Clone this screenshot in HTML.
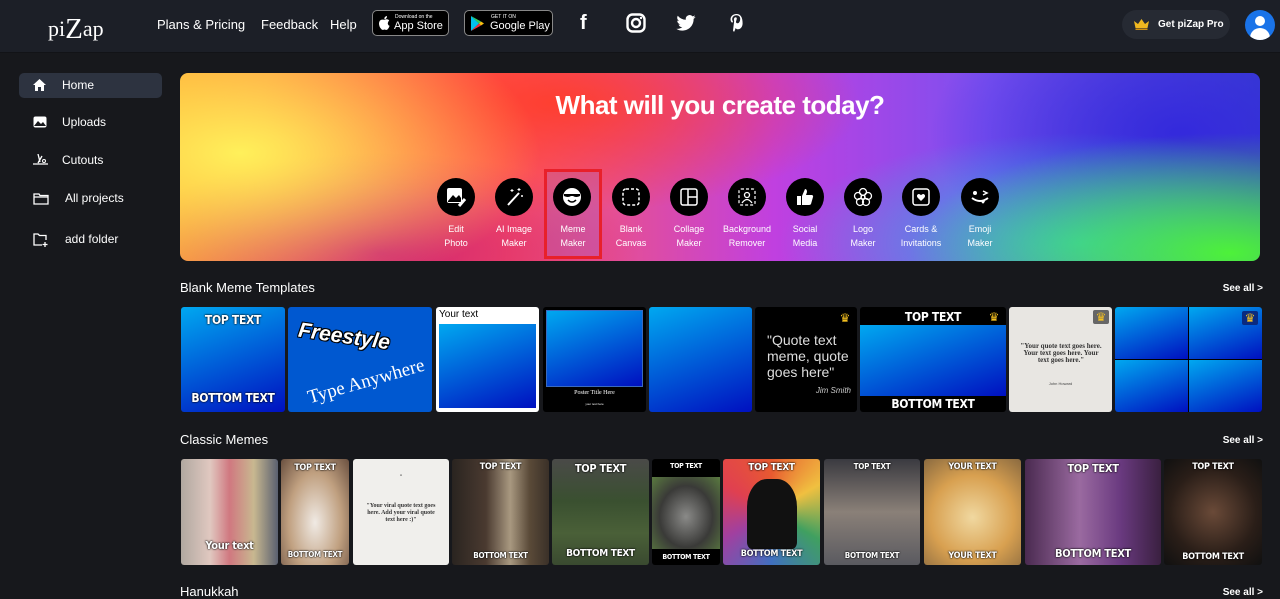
<!DOCTYPE html>
<html><head><meta charset="utf-8">
<style>
*{box-sizing:border-box;margin:0;padding:0}
body{width:1280px;height:596px;overflow:hidden;background:#17181c;font-family:"Liberation Sans",sans-serif;color:#fff;position:relative}
.hdr{position:absolute;left:0;top:0;width:1280px;height:53px;background:#1c1f27;border-bottom:1px solid #121317}
.abs{position:absolute}
.nav{font-size:13px;top:17px}
.badge{position:absolute;top:10px;height:26px;border:1px solid #888;border-radius:5px;background:#000}
.side{position:absolute;left:19px;width:143px;height:25px;font-size:12px;line-height:25px}
.side span{position:absolute;left:43px}
.side svg{position:absolute;left:14px;top:6px}
.banner{position:absolute;left:180px;top:73px;width:1080px;height:188px;border-radius:8px;overflow:hidden;
background:
radial-gradient(ellipse 300px 150px at 60px 80px,rgba(255,240,90,1),rgba(255,200,60,0) 100%),
radial-gradient(ellipse 320px 120px at 1050px 180px,rgba(80,255,40,.9),rgba(80,255,40,0) 100%),
radial-gradient(ellipse 300px 110px at 900px 170px,rgba(40,200,220,.8),rgba(40,200,220,0) 100%),
radial-gradient(ellipse 250px 140px at 1000px 60px,rgba(50,40,220,.95),rgba(50,40,220,0) 100%),
radial-gradient(ellipse 300px 110px at 380px 30px,rgba(255,60,40,.9),rgba(255,60,40,0) 100%),
radial-gradient(ellipse 260px 100px at 200px 180px,rgba(200,20,120,.9),rgba(200,20,120,0) 100%),
linear-gradient(90deg,#ff9a30 0%,#ff5a60 30%,#c040e0 55%,#7a50f0 75%,#3a40d0 100%)}
.ic{position:absolute;top:178px;width:38px;height:38px;border-radius:50%;background:#000}
.ic svg{position:absolute;left:9px;top:9px}
.lb{position:absolute;top:222px;width:70px;text-align:center;font-size:9px;line-height:14px}
.sec{position:absolute;left:180px;font-size:13px}
.see{position:absolute;right:17px;font-size:10px;font-weight:bold}
.t{position:absolute;overflow:hidden;border-radius:3px}
.bl{background:linear-gradient(160deg,#00a8f0,#0010c0)}
.imp{font-family:"Liberation Sans Narrow","DejaVu Sans Condensed","Liberation Sans",sans-serif;font-weight:bold;color:#fff;text-align:center;font-size:12px;text-shadow:0 0 2px #000,0 0 1px #000;position:absolute;width:100%;letter-spacing:-.3px;white-space:nowrap}
.crown{position:absolute;width:16px;height:14px;color:#f4c020;font-size:12px;text-align:center;line-height:14px}
</style></head><body>
<div class="hdr">
 <div class="abs" style="left:48px;top:11px;font-family:'Liberation Serif',serif;font-size:22px">pi<span style="font-size:29px;position:relative;top:2px">Z</span>ap</div>
 <div class="abs nav" style="left:157px">Plans &amp; Pricing</div>
 <div class="abs nav" style="left:261px">Feedback</div>
 <div class="abs nav" style="left:330px">Help</div>
 <div class="badge" style="left:372px;width:77px"><svg style="position:absolute;left:6px;top:5px" width="11" height="14" viewBox="0 0 11 14"><path d="M8 0Q8.2 1.8 6.5 3Q5.5 3.4 5.3 2.5Q5.5 0.6 8 0Z M5.5 3.8Q7 3.1 8 3.3Q9.5 3.5 10.2 4.6Q8.6 5.7 8.8 7.5Q9 9.2 10.6 9.9Q9.8 12.5 8.3 13.6Q7.5 14.2 6.4 13.7Q5.5 13.3 4.6 13.7Q3.5 14.2 2.7 13.5Q0 11 0 7.5Q0.2 4 3 3.6Q4.2 3.5 5.5 3.8Z" fill="#fff"/></svg><span style="position:absolute;left:22px;top:3px;font-size:5px">Download on the</span><span style="position:absolute;left:21px;top:9px;font-size:11px">App Store</span></div>
 <div class="badge" style="left:464px;width:89px"><svg style="position:absolute;left:6px;top:5px" width="13" height="15" viewBox="0 0 13 15"><path d="M0 0L8 7.5L0 15Z" fill="#00c0f0"/><path d="M0 0L10 5.5L8 7.5Z" fill="#30d060"/><path d="M0 15L10 9.5L8 7.5Z" fill="#f03040"/><path d="M10 5.5L13 7.5L10 9.5L8 7.5Z" fill="#f8c010"/></svg><span style="position:absolute;left:26px;top:3px;font-size:5px">GET IT ON</span><span style="position:absolute;left:25px;top:9px;font-size:11px">Google Play</span></div>
 <div class="abs" style="left:580px;top:12px;font-size:20px;font-weight:bold">f</div>
 <svg class="abs" style="left:626px;top:13px" width="20" height="20" viewBox="0 0 20 20"><rect x="1.5" y="1.5" width="17" height="17" rx="5" fill="none" stroke="#fff" stroke-width="2.4"/><circle cx="10" cy="10" r="4" fill="none" stroke="#fff" stroke-width="2.4"/><circle cx="15" cy="5" r="1.2" fill="#fff"/></svg>
 <svg class="abs" style="left:676px;top:15px" width="20" height="16" viewBox="0 0 24 20"><path d="M24 2.4a10 10 0 0 1-2.8.8A5 5 0 0 0 23.3.5a10 10 0 0 1-3.1 1.2A4.9 4.9 0 0 0 11.8 6 14 14 0 0 1 1.7.9a4.9 4.9 0 0 0 1.5 6.6A4.9 4.9 0 0 1 1 6.9a4.9 4.9 0 0 0 3.9 4.8 5 5 0 0 1-2.2.1 4.9 4.9 0 0 0 4.6 3.4A9.9 9.9 0 0 1 0 17.3 14 14 0 0 0 7.5 19.5c9.1 0 14-7.5 14-14v-.6A10 10 0 0 0 24 2.4z" fill="#fff"/></svg>
 <svg class="abs" style="left:729px;top:13px" width="15" height="20" viewBox="0 0 15 20"><path d="M7.5 1C3.5 1 1.5 3.8 1.5 6.3c0 1.6.6 3 1.9 3.5l.6-1.5c-.5-.6-.8-1.2-.8-2.1 0-2.5 1.9-4 4.3-4 2.3 0 3.7 1.5 3.7 3.5 0 2.6-1.2 4.6-2.8 4.6-.9 0-1.6-.8-1.4-1.7.3-1.1.8-2.3.8-3.1 0-.7-.4-1.3-1.2-1.3-.9 0-1.7 1-1.7 2.3 0 .8.3 1.4.3 1.4L4 17.5 5 19c.6-1 1.3-2.8 1.6-4 .5.8 1.3 1.3 2.4 1.3 3 0 4.6-3 4.6-6C13.6 3.9 11.3 1 7.5 1z" fill="#fff"/></svg>
 <div class="abs" style="left:1122px;top:10px;width:108px;height:29px;border-radius:15px;background:#262a33"><svg style="position:absolute;left:12px;top:9px" width="15" height="11" viewBox="0 0 15 11"><path d="M0 2L4 5L7.5 0L11 5L15 2L13.5 9H1.5Z" fill="#f0b820"/><rect x="1.5" y="9.5" width="12" height="1.5" fill="#d09010"/></svg><span style="position:absolute;left:36px;top:9px;font-size:10px;font-weight:bold">Get piZap Pro</span></div>
 <div class="abs" style="left:1245px;top:10px;width:30px;height:30px;border-radius:50%;background:#1a73e8;overflow:hidden"><div style="position:absolute;left:10px;top:6px;width:10px;height:10px;border-radius:50%;background:#fff"></div><div style="position:absolute;left:5px;top:18px;width:20px;height:14px;border-radius:10px 10px 0 0;background:#fff"></div></div>
</div>

<div class="side" style="top:73px;background:#2d3340;border-radius:5px"><svg width="13" height="12" viewBox="0 0 13 12"><path d="M6.5 0L13 6H11V12H8V8H5V12H2V6H0Z" fill="#fff"/></svg><span>Home</span></div>
<div class="side" style="top:110px"><svg width="14" height="12" viewBox="0 0 14 12"><rect x="0.5" y="0.5" width="13" height="11" rx="2" fill="#fff"/><path d="M1 10L5 5L8 8L10 6L13 10Z" fill="#17181c"/></svg><span>Uploads</span></div>
<div class="side" style="top:148px"><svg width="15" height="13" viewBox="0 0 15 13"><path d="M5 0L7 8M9 2L5 9M0 10H15" stroke="#fff" stroke-width="1.3" fill="none"/><circle cx="11" cy="7" r="1.5" stroke="#fff" fill="none"/></svg><span>Cutouts</span></div>
<div class="side" style="top:186px"><svg width="16" height="13" viewBox="0 0 16 13"><path d="M1 2H6L7 3.5H15V12H1Z M1 5H15" stroke="#fff" stroke-width="1.3" fill="none"/></svg><span style="left:46px">All projects</span></div>
<div class="side" style="top:227px"><svg width="16" height="14" viewBox="0 0 16 14"><path d="M9 12H1V1H5L6.5 2.5H13V7 M12 9V14 M9.5 11.5H14.5" stroke="#fff" stroke-width="1.3" fill="none"/></svg><span style="left:46px">add folder</span></div>

<div class="banner">
 <div style="position:absolute;width:100%;top:17px;text-align:center;font-size:26px;font-weight:bold;letter-spacing:-.5px">What will you create today?</div>
</div>
<div class="abs" style="left:544px;top:169px;width:58px;height:90px;border:3px solid #e8202a;background:rgba(130,120,240,.2)"></div>

<div class="ic" style="left:437px"><svg width="20" height="20" viewBox="0 0 20 20"><rect x="1" y="1" width="15" height="15" rx="2" fill="#fff"/><path d="M2 14L7 8L10 11L13 8L15 11V15H2Z" fill="#000"/><path d="M13 19L19 12" stroke="#fff" stroke-width="3"/></svg></div>
<div class="ic" style="left:495px"><svg width="20" height="20" viewBox="0 0 20 20"><path d="M4 18L15 6" stroke="#fff" stroke-width="2"/><path d="M8 2V5M6.5 3.5H9.5M15 1V4M13.5 2.5H16.5M18 8V10M17 9H19" stroke="#fff" stroke-width="1"/></svg></div>
<div class="ic" style="left:553px"><svg width="20" height="20" viewBox="0 0 20 20"><circle cx="10" cy="10" r="9" fill="#fff"/><path d="M2 7H18V9Q14 11 11 9H9Q6 11 2 9Z" fill="#000"/><path d="M6 13Q10 17 14 13" stroke="#000" stroke-width="1.5" fill="none"/></svg></div>
<div class="ic" style="left:612px"><svg width="20" height="20" viewBox="0 0 20 20"><rect x="2" y="2" width="16" height="16" rx="3" fill="none" stroke="#fff" stroke-width="1.5" stroke-dasharray="3 2"/></svg></div>
<div class="ic" style="left:670px"><svg width="20" height="20" viewBox="0 0 20 20"><rect x="2" y="2" width="16" height="16" rx="2" fill="none" stroke="#fff" stroke-width="1.5"/><path d="M9 2V18M9 10H18" stroke="#fff" stroke-width="1.5"/></svg></div>
<div class="ic" style="left:728px"><svg width="20" height="20" viewBox="0 0 20 20"><rect x="2" y="2" width="16" height="16" rx="2" fill="none" stroke="#fff" stroke-width="1.2" stroke-dasharray="3 2"/><circle cx="10" cy="8" r="2.5" fill="none" stroke="#fff" stroke-width="1.3"/><path d="M5 16Q10 9 15 16" fill="none" stroke="#fff" stroke-width="1.3"/></svg></div>
<div class="ic" style="left:786px"><svg width="20" height="20" viewBox="0 0 20 20"><path d="M2 9H6V18H2Z M7 9L10 2Q12 2 12 5L11 8H17Q18.5 8.5 18 10L16 17Q15.5 18 14 18H7Z" fill="#fff"/></svg></div>
<div class="ic" style="left:844px"><svg width="20" height="20" viewBox="0 0 20 20"><g fill="none" stroke="#fff" stroke-width="1.3"><circle cx="10" cy="5" r="3.5"/><circle cx="15" cy="9" r="3.5"/><circle cx="13" cy="15" r="3.5"/><circle cx="7" cy="15" r="3.5"/><circle cx="5" cy="9" r="3.5"/><circle cx="10" cy="10" r="2"/></g></svg></div>
<div class="ic" style="left:902px"><svg width="20" height="20" viewBox="0 0 20 20"><rect x="2" y="2" width="16" height="16" rx="2.5" fill="none" stroke="#fff" stroke-width="1.5"/><path d="M10 14L6.5 10.5Q5 8 7.5 7Q9 6.8 10 8.3Q11 6.8 12.5 7Q15 8 13.5 10.5Z" fill="#fff"/></svg></div>
<div class="ic" style="left:961px"><svg width="20" height="20" viewBox="0 0 20 20"><circle cx="5" cy="6" r="2" fill="#fff"/><path d="M13 4L17 6L13 8" stroke="#fff" stroke-width="1.5" fill="none"/><path d="M2 11Q10 17 18 11" stroke="#fff" stroke-width="2" fill="none"/><path d="M11 14Q13 19 15 14" fill="#fff"/></svg></div>

<div class="lb" style="left:421px">Edit<br>Photo</div>
<div class="lb" style="left:479px">AI Image<br>Maker</div>
<div class="lb" style="left:538px">Meme<br>Maker</div>
<div class="lb" style="left:596px">Blank<br>Canvas</div>
<div class="lb" style="left:654px">Collage<br>Maker</div>
<div class="lb" style="left:712px">Background<br>Remover</div>
<div class="lb" style="left:770px">Social<br>Media</div>
<div class="lb" style="left:828px">Logo<br>Maker</div>
<div class="lb" style="left:886px">Cards &amp;<br>Invitations</div>
<div class="lb" style="left:945px">Emoji<br>Maker</div>

<div class="sec" style="top:280px">Blank Meme Templates</div>
<div class="see" style="top:283px">See all &gt;</div>

<div class="t bl" style="left:181px;top:307px;width:104px;height:105px"><div class="imp" style="top:6px">TOP TEXT</div><div class="imp" style="top:84px">BOTTOM TEXT</div></div>
<div class="t" style="left:288px;top:307px;width:144px;height:105px;background:#0058d0"><div style="position:absolute;left:10px;top:18px;font-size:21px;font-weight:bold;font-style:italic;transform:rotate(8deg);text-shadow:1px 1px 0 #000,-1px -1px 0 #000,1px -1px 0 #000,-1px 1px 0 #000">Freestyle</div><div style="position:absolute;left:18px;top:64px;font-family:'Liberation Serif',serif;font-size:19px;transform:rotate(-16deg)">Type Anywhere</div></div>
<div class="t" style="left:436px;top:307px;width:103px;height:105px;background:#fff"><div style="position:absolute;left:3px;top:2px;font-size:10px;color:#000">Your text</div><div class="bl" style="position:absolute;left:3px;top:17px;width:97px;height:84px"></div></div>
<div class="t" style="left:543px;top:307px;width:103px;height:105px;background:#000"><div class="bl" style="position:absolute;left:3px;top:3px;width:97px;height:77px;border:1px solid #3a6ac0"></div><div style="position:absolute;top:83px;width:100%;text-align:center;font-family:'Liberation Serif',serif;font-size:6px">Poster Title Here</div><div style="position:absolute;top:95px;width:100%;text-align:center;font-size:3px">your text here</div></div>
<div class="t bl" style="left:649px;top:307px;width:103px;height:105px"></div>
<div class="t" style="left:755px;top:307px;width:102px;height:105px;background:#000"><div style="position:absolute;left:12px;top:25px;font-size:14px;line-height:16px;color:#ddd">"Quote text meme, quote goes here"</div><div style="position:absolute;right:6px;top:79px;font-size:8px;font-style:italic;color:#ccc">Jim Smith</div><div class="crown" style="right:4px;top:4px">&#9819;</div></div>
<div class="t" style="left:860px;top:307px;width:146px;height:105px;background:#000"><div class="imp" style="top:3px">TOP TEXT</div><div class="bl" style="position:absolute;left:0;top:18px;width:100%;height:71px"></div><div class="imp" style="top:90px">BOTTOM TEXT</div><div class="crown" style="right:4px;top:3px">&#9819;</div></div>
<div class="t" style="left:1009px;top:307px;width:103px;height:105px;background:#e8e6e2"><div style="position:absolute;left:10px;top:36px;width:84px;text-align:center;font-family:'Liberation Serif',serif;font-weight:bold;font-size:7px;line-height:7px;color:#333">"Your quote text goes here. Your text goes here. Your text goes here."</div><div style="position:absolute;top:74px;width:100%;text-align:center;font-size:4px;color:#444">John Howard</div><div class="crown" style="right:3px;top:3px;background:#666;border-radius:2px">&#9819;</div></div>
<div class="t" style="left:1115px;top:307px;width:147px;height:105px;background:#000"><div class="bl" style="position:absolute;left:0;top:0;width:73px;height:52px"></div><div class="bl" style="position:absolute;left:74px;top:0;width:73px;height:52px"></div><div class="bl" style="position:absolute;left:0;top:53px;width:73px;height:52px"></div><div class="bl" style="position:absolute;left:74px;top:53px;width:73px;height:52px"></div><div class="crown" style="right:4px;top:4px;background:#0a2a80;border-radius:2px">&#9819;</div></div>

<div class="sec" style="top:432px">Classic Memes</div>
<div class="see" style="top:435px">See all &gt;</div>

<div class="t" style="left:181px;top:459px;width:97px;height:106px;background:linear-gradient(90deg,#b0a8a0,#e0c8c0 30%,#d07880 50%,#c8b890 75%,#5a6070)"><div class="imp" style="top:80px;font-size:11px">Your text</div></div>
<div class="t" style="left:281px;top:459px;width:68px;height:106px;background:radial-gradient(ellipse at 50% 60%,#f0eae4,#c0a080 55%,#6a5040)"><div class="imp" style="top:4px;font-size:9px">TOP TEXT</div><div class="imp" style="top:91px;font-size:8px">BOTTOM TEXT</div></div>
<div class="t" style="left:353px;top:459px;width:96px;height:106px;background:#f0efec"><div style="position:absolute;top:16px;width:100%;text-align:center;font-size:6px;color:#333">"</div><div style="position:absolute;left:10px;top:44px;width:76px;text-align:center;font-family:'Liberation Serif',serif;font-weight:bold;font-size:6px;line-height:7px;color:#333">"Your viral quote text goes here. Add your viral quote text here :)"</div></div>
<div class="t" style="left:452px;top:459px;width:97px;height:106px;background:linear-gradient(90deg,#2a2420,#4a3a30 35%,#a89880 60%,#5a4a38 80%,#3a3028)"><div class="imp" style="top:3px;font-size:9px">TOP TEXT</div><div class="imp" style="top:92px;font-size:8px">BOTTOM TEXT</div></div>
<div class="t" style="left:552px;top:459px;width:97px;height:106px;background:linear-gradient(180deg,#4a4a48,#3a5030 40%,#4a6038 70%,#3a4a30)"><div class="imp" style="top:3px;font-size:11px">TOP TEXT</div><div class="imp" style="top:89px;font-size:10px">BOTTOM TEXT</div></div>
<div class="t" style="left:652px;top:459px;width:68px;height:106px;background:#000"><div style="position:absolute;left:0;top:18px;width:100%;height:72px;background:radial-gradient(ellipse at 50% 55%,#8a8a88,#3a3a38 55%,#5a7a40)"></div><div class="imp" style="top:3px;font-size:7px">TOP TEXT</div><div class="imp" style="top:94px;font-size:7px">BOTTOM TEXT</div></div>
<div class="t" style="left:723px;top:459px;width:97px;height:106px;background:conic-gradient(from 0deg at 50% 50%,#e85a30,#f0c040,#40a060,#4070c0,#a040a0,#e04050,#e85a30)"><div style="position:absolute;left:24px;top:20px;width:50px;height:70px;background:#111;border-radius:40% 40% 10% 10%"></div><div class="imp" style="top:3px;font-size:10px">TOP TEXT</div><div class="imp" style="top:90px;font-size:9px">BOTTOM TEXT</div></div>
<div class="t" style="left:824px;top:459px;width:96px;height:106px;background:linear-gradient(180deg,#3a3a40,#8a8078 50%,#5a5a60)"><div class="imp" style="top:3px;font-size:8px">TOP TEXT</div><div class="imp" style="top:92px;font-size:8px">BOTTOM TEXT</div></div>
<div class="t" style="left:924px;top:459px;width:97px;height:106px;background:radial-gradient(circle at 50% 55%,#f0d8a0,#d8a050 55%,#8a6a40)"><div class="imp" style="top:3px;font-size:9px">YOUR TEXT</div><div class="imp" style="top:92px;font-size:9px">YOUR TEXT</div></div>
<div class="t" style="left:1025px;top:459px;width:136px;height:106px;background:linear-gradient(90deg,#4a2a50,#9a6aa0 40%,#6a3a80 70%,#3a2040)"><div class="imp" style="top:3px;font-size:11px">TOP TEXT</div><div class="imp" style="top:88px;font-size:11px">BOTTOM TEXT</div></div>
<div class="t" style="left:1164px;top:459px;width:98px;height:106px;background:radial-gradient(circle at 50% 50%,#6a4a38,#2a1e18 60%,#101010)"><div class="imp" style="top:3px;font-size:9px">TOP TEXT</div><div class="imp" style="top:93px;font-size:9px">BOTTOM TEXT</div></div>

<div class="sec" style="top:584px">Hanukkah</div>
<div class="see" style="top:587px">See all &gt;</div>
</body></html>
